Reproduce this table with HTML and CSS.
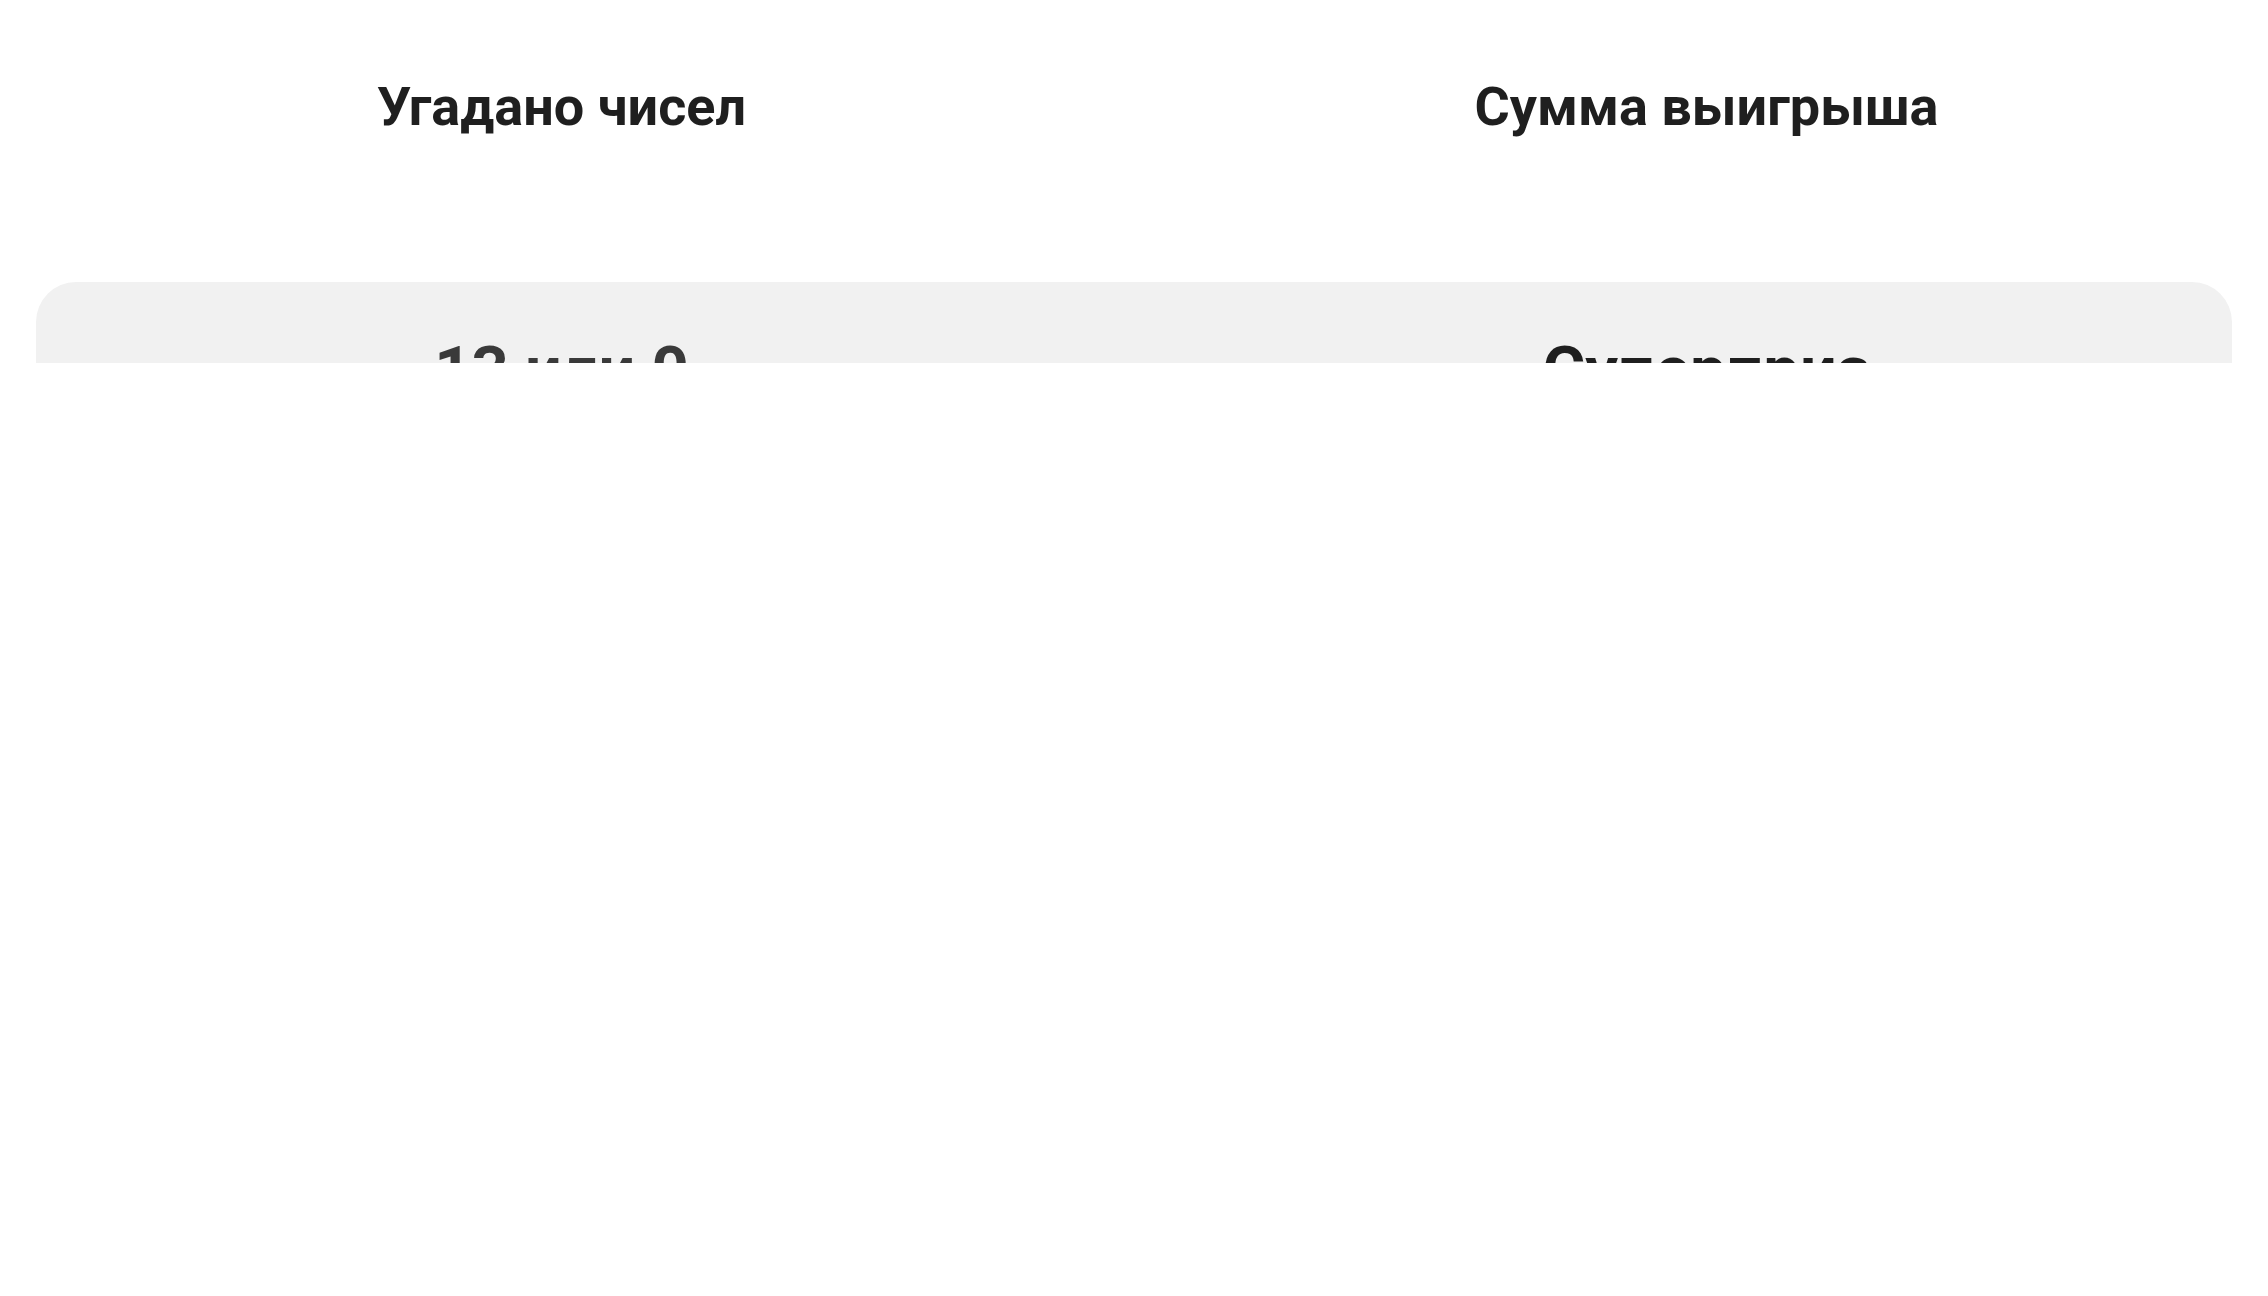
FILE: index.html
```html
<!DOCTYPE html>
<html lang="ru">

<head>
    <meta charset="UTF-8">
    <title>Таблица выигрышей</title>
    <link rel="stylesheet" href="styles.css">
</head>

<body>
    <div class="prize-table">
        <div class="prize-head">
            <div class="prize-cell">Угадано чисел</div>
            <div class="prize-cell">Сумма выигрыша</div>
        </div>
        <div class="prize-body">
            <div class="prize-row">
                <div class="prize-cell big muted">13 или 0</div>
                <div class="prize-cell big">Суперприз</div>
            </div>
        </div>
    </div>
</body>

</html>
```

FILE: styles.css
```css
body {
    margin: 0;
    padding: 0;
    font-family: Roboto, "Liberation Sans", Arial, sans-serif;
    background-color: #ffffff;
    color: #1f1f1f;
}

/* the visible part of the table is clipped at the bottom */
.prize-table {
    height: 363px;
    overflow: hidden;
}

.prize-head,
.prize-row {
    display: grid;
    grid-template-columns: 1fr 1fr;
    column-gap: 22px;
}

.prize-head {
    padding: 75px 0 143px 0;
}

.prize-cell {
    text-align: center;
    font-size: 54px;
    font-weight: 700;
    line-height: 64px;
}

.prize-cell.big {
    font-size: 65px;
}

.prize-body {
    margin: 0 36px;
    background-color: #f1f1f1;
    border-radius: 40px;
}

.prize-row {
    padding: 56px 0 56px 0;
    margin-left: -36px;
    margin-right: -36px;
}

.muted {
    color: #3a3a3a;
}
```
